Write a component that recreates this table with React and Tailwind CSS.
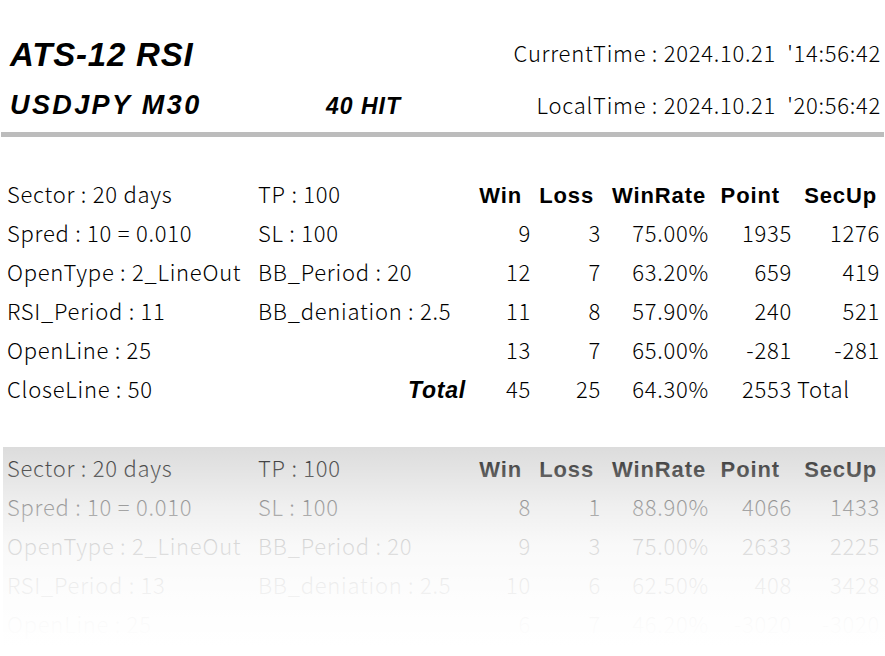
import React from 'react';

const jp = { fontFamily: '"Noto Sans CJK JP", "Noto Sans", sans-serif' };
const arial = { fontFamily: '"Liberation Sans", Arial, sans-serif' };

const top = {
  params: [
    ['Sector : 20 days', 'TP : 100'],
    ['Spred : 10 = 0.010', 'SL : 100'],
    ['OpenType : 2_LineOut', 'BB_Period : 20'],
    ['RSI_Period : 11', 'BB_deniation : 2.5'],
    ['OpenLine : 25', ''],
    ['CloseLine : 50', ''],
  ],
  stats: [
    ['9', '3', '75.00%', '1935', '1276'],
    ['12', '7', '63.20%', '659', '419'],
    ['11', '8', '57.90%', '240', '521'],
    ['13', '7', '65.00%', '-281', '-281'],
  ],
  total: ['45', '25', '64.30%', '2553'],
};

const bottom = {
  params: [
    ['Sector : 20 days', 'TP : 100'],
    ['Spred : 10 = 0.010', 'SL : 100'],
    ['OpenType : 2_LineOut', 'BB_Period : 20'],
    ['RSI_Period : 13', 'BB_deniation : 2.5'],
    ['OpenLine : 25', ''],
  ],
  stats: [
    ['8', '1', '88.90%', '4066', '1433'],
    ['9', '3', '75.00%', '2633', '2225'],
    ['10', '6', '62.50%', '408', '3428'],
    ['6', '7', '46.20%', '-3020', '-3020'],
  ],
};

const Header = () => (
  <div className="flex font-bold text-[22px] tracking-[0.04em]" style={arial}>
    <div className="w-[65px] text-right pr-[9px]">Win</div>
    <div className="w-[70px] text-right pr-[7px]">Loss</div>
    <div className="w-[108px] text-right pr-[3px]">WinRate</div>
    <div className="w-[83px] text-right pr-[12px]">Point</div>
    <div className="w-[88px] text-right pr-[3px]">SecUp</div>
  </div>
);

const Stats = ({ row }) => (
  <div className="flex">
    <div className="w-[65px] text-right">{row[0]}</div>
    <div className="w-[70px] text-right">{row[1]}</div>
    <div className="w-[108px] text-right">{row[2]}</div>
    <div className="w-[83px] text-right">{row[3]}</div>
    <div className="w-[88px] text-right">{row[4]}</div>
  </div>
);

const Table = ({ data, showTotal }) => {
  return (
    <div className="pl-[7px] text-[22px] leading-[39px] font-light tracking-[0.75px] text-black" style={jp}>
      {data.params.map((p, i) => (
        <div key={i} className="flex items-baseline h-[39px]">
          <div className="w-[251px] whitespace-nowrap">{p[0]}</div>
          <div className="w-[208px] whitespace-nowrap">
            {i === 5 && showTotal ? (
              <div className="text-right font-bold italic text-[23px] tracking-[0.8px]" style={arial}>Total</div>
            ) : p[1]}
          </div>
          {i === 0 && <Header />}
          {i > 0 && data.stats[i - 1] && <Stats row={data.stats[i - 1]} />}
          {i === 5 && showTotal && (
            <div className="flex">
              <div className="w-[65px] text-right">{data.total[0]}</div>
              <div className="w-[70px] text-right">{data.total[1]}</div>
              <div className="w-[108px] text-right">{data.total[2]}</div>
              <div className="w-[83px] text-right">{data.total[3]}</div>
              <div className="w-[88px] pl-[5px]">Total</div>
            </div>
          )}
        </div>
      ))}
    </div>
  );
};

export default function App() {
  return (
    <div className="w-[885px] h-[656px] overflow-hidden bg-white text-black">
      <div className="pt-[30px] pl-[10px] pr-[4px]">
        <div className="flex items-baseline justify-between h-[50px]">
          <div className="text-[33px] font-bold italic tracking-[0.8px]" style={arial}>ATS-12 RSI</div>
          <div className="text-[22px] font-light tracking-[0.73px] whitespace-pre -translate-y-[4px]" style={jp}>CurrentTime : 2024.10.21  '14:56:42</div>
        </div>
        <div className="flex items-baseline h-[50px] pt-[5px]">
          <div className="w-[316px] text-[27px] font-bold italic tracking-[2.4px]" style={arial}>USDJPY M30</div>
          <div className="text-[23px] font-bold italic tracking-[1px]" style={arial}>40 HIT</div>
          <div className="ml-auto text-[22px] font-light tracking-[0.73px] whitespace-pre" style={jp}>LocalTime : 2024.10.21  '20:56:42</div>
        </div>
      </div>
      <div className="mx-[1px] mt-[2px] h-[5px] bg-[#bcbcbc]" />

      <div className="pt-[37px]">
        <Table data={top} showTotal />
      </div>

      <div className="relative mt-[39px] ml-[3px] h-[235px] bg-[#d6d6d6]">
        <div className="-ml-[3px] pt-[1px]">
          <Table data={bottom} />
        </div>
        <div className="absolute inset-0 bg-[linear-gradient(to_bottom,rgba(255,255,255,0.15)_0px,rgba(255,255,255,0.62)_59px,rgba(255,255,255,0.85)_98px,rgba(255,255,255,0.93)_137px,rgba(255,255,255,0.98)_176px,#fff_200px)]" />
      </div>
    </div>
  );
}
